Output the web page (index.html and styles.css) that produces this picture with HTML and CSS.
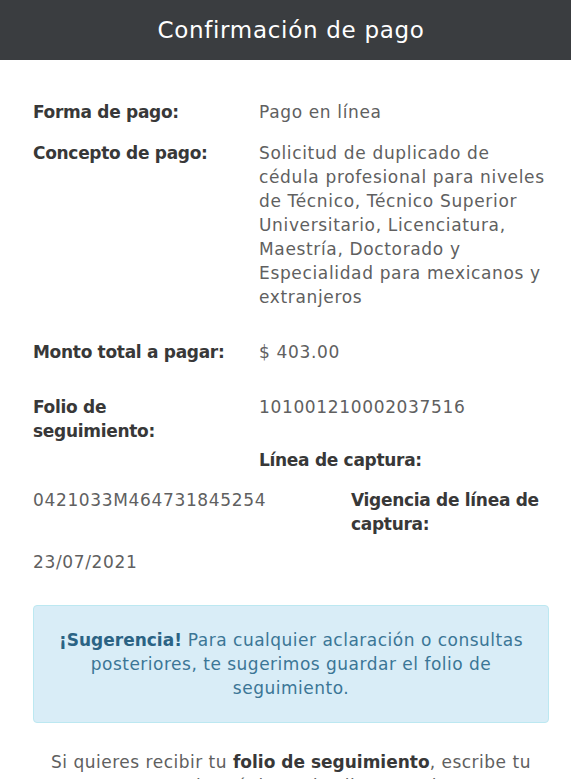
FILE: index.html
```html
<!DOCTYPE html>
<html lang="es">
<head>
<meta charset="utf-8">
<title>Confirmación de pago</title>
<link rel="stylesheet" href="styles.css">
</head>
<body>
<header class="topbar">
  <h1 class="topbar-title">Confirmación de pago</h1>
</header>
<main class="content">
  <div class="row row-first">
    <div class="label">Forma de pago:</div>
    <div class="value">Pago en línea</div>
  </div>
  <div class="row row-concept">
    <div class="label">Concepto de pago:</div>
    <div class="value">Solicitud de duplicado de cédula profesional para niveles de Técnico, Técnico Superior Universitario, Licenciatura, Maestría, Doctorado y Especialidad para mexicanos y extranjeros</div>
  </div>
  <div class="row row-amount">
    <div class="label">Monto total a pagar:</div>
    <div class="value">$ 403.00</div>
  </div>
  <div class="row row-folio">
    <div class="label">Folio de<br>seguimiento:</div>
    <div class="value-stack">
      <div class="value">101001210002037516</div>
      <div class="label label-sub">Línea de captura:</div>
    </div>
  </div>
  <div class="row row-capture">
    <div class="value code">0421033M464731845254</div>
    <div class="label label-validity">Vigencia de línea de<br>captura:</div>
  </div>
  <div class="row row-date">
    <div class="value">23/07/2021</div>
  </div>
  <div class="alert-info">
    <strong>¡Sugerencia!</strong> Para cualquier aclaración o consultas posteriores, te sugerimos guardar el folio de seguimiento.
  </div>
  <p class="footnote">Si quieres recibir tu <strong>folio de seguimiento</strong>, escribe tu correo electrónico y da clic en enviar.</p>
</main>
</body>
</html>
```

FILE: styles.css
```css
* { box-sizing: border-box; }

html, body {
  margin: 0;
  padding: 0;
  background: #ffffff;
}

body {
  font-family: "DejaVu Sans", "Noto Sans", sans-serif;
  font-size: 17px;
  line-height: 24px;
  color: #606060;
}

.topbar {
  height: 60px;
  background: #3a3d40;
  display: flex;
  align-items: center;
  justify-content: center;
  padding: 0 22px 0 33px;
}

.topbar-title {
  margin: 0;
  font-size: 23px;
  font-weight: normal;
  letter-spacing: 0.7px;
  color: #ffffff;
  line-height: 30px;
}

.content {
  padding: 40px 22px 0 33px;
}

.row {
  display: flex;
  gap: 30px;
}

.label {
  width: 196px;
  flex: none;
  font-weight: bold;
  color: #383838;
  letter-spacing: -0.3px;
}

.value {
  flex: 1;
  letter-spacing: 0.65px;
  color: #606060;
}

.row-concept { margin-top: 17px; }
.row-amount { margin-top: 31px; }
.row-folio { margin-top: 31px; }

.value-stack {
  flex: 1;
  display: flex;
  flex-direction: column;
}

.label-sub {
  margin-top: 29px;
}

.row-capture { margin-top: 16px; }

.code {
  width: 288px;
  flex: none;
}

.label-validity {
  width: 198px;
}

.row-date { margin-top: 14px; }

.alert-info {
  margin-top: 31px;
  padding: 22px 18px;
  background: #d9edf7;
  border: 1px solid #bce8f1;
  border-radius: 4px;
  color: #3b7696;
  text-align: center;
  letter-spacing: 0.5px;
}

.alert-info strong {
  color: #2b6384;
  letter-spacing: 0;
}

.footnote {
  margin: 27px 0 0;
  text-align: center;
  letter-spacing: 0.5px;
  color: #606060;
}

.footnote strong {
  color: #383838;
  letter-spacing: 0;
}
```
